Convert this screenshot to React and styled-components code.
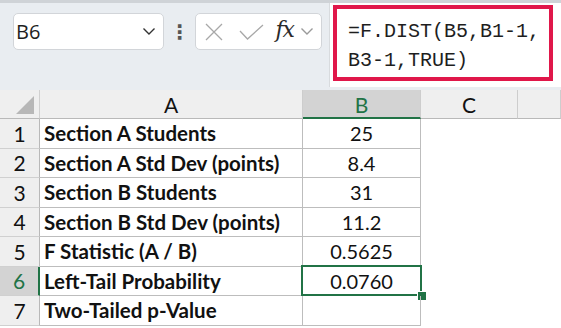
import React from 'react';
import styled, { createGlobalStyle } from 'styled-components';

const GlobalStyle = createGlobalStyle`
  html, body {
    margin: 0;
    padding: 0;
    background: #ffffff;
  }
  * { box-sizing: border-box; }
`;

const rows = [
  { label: 'Section A Students', value: '25' },
  { label: 'Section A Std Dev (points)', value: '8.4' },
  { label: 'Section B Students', value: '31' },
  { label: 'Section B Std Dev (points)', value: '11.2' },
  { label: 'F Statistic (A / B)', value: '0.5625' },
  { label: 'Left-Tail Probability', value: '0.0760', selected: true },
  { label: 'Two-Tailed p-Value', value: '' },
];

const Chevron = ({ color = '#333' }) => (
  <svg width="14" height="9" viewBox="0 0 14 9">
    <path d="M1.5 1.5 L7 7 L12.5 1.5" fill="none" stroke={color} strokeWidth="1.4" />
  </svg>
);

const CancelIcon = () => (
  <svg width="18" height="18" viewBox="0 0 18 18">
    <path d="M1 1 L17 17 M17 1 L1 17" stroke="#a8a8a8" strokeWidth="1.3" fill="none" />
  </svg>
);

const CheckIcon = () => (
  <svg width="25" height="16" viewBox="0 0 25 16">
    <path d="M1 7 L8.5 15 L24 1" stroke="#a8a8a8" strokeWidth="1.3" fill="none" />
  </svg>
);

export default function App() {
  return (
    <>
      <GlobalStyle />
      <Page>
        <Toolbar>
          <NameBox>
            <span>B6</span>
            <Chevron />
          </NameBox>
          <Dots>⋮</Dots>
          <FxBox>
            <CancelIcon />
            <CheckIcon />
            <Fx>fx</Fx>
            <Chevron color="#9a9a9a" />
          </FxBox>
          <FormulaBar>
            <Highlight>
              =F.DIST(B5,B1-1,<br />B3-1,TRUE)
            </Highlight>
          </FormulaBar>
        </Toolbar>
        <Sheet>
          <Corner />
          <ColHeader>A</ColHeader>
          <ColHeader active>B</ColHeader>
          <ColHeader>C</ColHeader>
          <ColHeader />
          {rows.map((r, i) => (
            <React.Fragment key={i}>
              <RowHeader active={r.selected}>{i + 1}</RowHeader>
              <LabelCell>{r.label}</LabelCell>
              <ValueCell>
                {r.value}
                {r.selected && (
                  <Selection>
                    <Handle />
                  </Selection>
                )}
              </ValueCell>
              <Blank />
              <Blank />
            </React.Fragment>
          ))}
        </Sheet>
      </Page>
    </>
  );
}

const Page = styled.div`
  width: 561px;
  height: 328px;
  overflow: hidden;
  background: #ffffff;
`;

const Toolbar = styled.div`
  height: 90px;
  background: #e9edf1;
  border-top: 3px solid #cfd3d7;
  display: flex;
  align-items: flex-start;
  padding: 10px 0 0 13px;
`;

const NameBox = styled.div`
  width: 151px;
  height: 37px;
  background: #ffffff;
  border: 1px solid #d2d5d9;
  border-radius: 5px;
  display: flex;
  align-items: center;
  justify-content: space-between;
  padding: 0 7px 0 2px;
  font-family: 'Open Sans', 'Liberation Sans', sans-serif;
  font-size: 20px;
  color: #1e1e1e;
`;

const Dots = styled.div`
  width: 32px;
  height: 37px;
  display: flex;
  align-items: center;
  justify-content: center;
  font-family: 'DejaVu Sans', sans-serif;
  font-size: 20px;
  font-weight: bold;
  color: #555;
`;

const FxBox = styled.div`
  width: 127px;
  height: 37px;
  background: #ffffff;
  border: 1px solid #d2d5d9;
  border-radius: 5px;
  display: flex;
  align-items: center;
  padding: 0 3px 0 9px;
  & > svg:nth-child(1) { margin-right: 16px; }
  & > svg:nth-child(2) { margin-right: 11px; }
`;

const Fx = styled.span`
  font-family: 'DejaVu Serif', 'Liberation Serif', serif;
  font-style: italic;
  font-size: 22px;
  letter-spacing: -1px;
  color: #2a2a2a;
  margin-right: 6px;
  line-height: 1;
  margin-top: -4px;
`;

const FormulaBar = styled.div`
  margin-left: 7px;
  margin-top: -10px;
  flex: 1;
  height: 84px;
  background: #ffffff;
  border-left: 1px solid #d8dbde;
  padding: 2px 8px 0 3px;
`;

const Highlight = styled.div`
  width: 220px;
  height: 76px;
  border: 4px solid #e0174a;
  padding: 8px 0 0 11px;
  font-family: 'Liberation Mono', 'DejaVu Sans Mono', monospace;
  font-size: 20px;
  line-height: 29px;
  color: #1e1e1e;
  white-space: nowrap;
`;

const Sheet = styled.div`
  display: grid;
  grid-template-columns: 40px 263px 118px 97px 1fr;
  grid-template-rows: 29px repeat(7, 29.5px);
  font-family: 'Lato', 'Open Sans', sans-serif;
  font-size: 20px;
  color: #111;
`;

const Corner = styled.div`
  background: #efefef;
  border-right: 1px solid #d0d0d0;
  border-bottom: 1px solid #b9b9b9;
  position: relative;
  &::after {
    content: '';
    position: absolute;
    right: 5px;
    bottom: 4px;
    width: 0;
    height: 0;
    border-left: 18px solid transparent;
    border-bottom: 18px solid #b7b7b7;
  }
`;

const ColHeader = styled.div`
  background: ${p => (p.active ? '#d3d3d3' : '#efefef')};
  color: ${p => (p.active ? '#217346' : '#111')};
  border-right: 1px solid #cdcdcd;
  border-bottom: ${p => (p.active ? '2px solid #217346' : '1px solid #b9b9b9')};
  display: flex;
  align-items: center;
  justify-content: center;
  font-size: 21px;
  padding-top: ${p => (p.active ? '1px' : '0')};
`;

const RowHeader = styled.div`
  background: ${p => (p.active ? '#d3d3d3' : '#efefef')};
  color: ${p => (p.active ? '#217346' : '#111')};
  border-right: ${p => (p.active ? '2px solid #217346' : '1px solid #b9b9b9')};
  border-bottom: 1px solid #d0d0d0;
  display: flex;
  align-items: center;
  justify-content: center;
  font-size: 21px;
`;

const LabelCell = styled.div`
  border-right: 1px solid #bdbdbd;
  border-bottom: 1px solid #bdbdbd;
  display: flex;
  align-items: center;
  padding-left: 4px;
  font-weight: bold;
  font-size: 20.5px;
  white-space: nowrap;
`;

const ValueCell = styled.div`
  border-right: 1px solid #bdbdbd;
  border-bottom: 1px solid #bdbdbd;
  display: flex;
  align-items: center;
  justify-content: center;
  position: relative;
`;

const Blank = styled.div`
  background: #ffffff;
`;

const Selection = styled.div`
  position: absolute;
  left: -2px;
  top: -2px;
  right: -2px;
  bottom: -1px;
  border: 2px solid #217346;
  pointer-events: none;
`;

const Handle = styled.div`
  position: absolute;
  right: -6px;
  bottom: -6px;
  width: 9px;
  height: 9px;
  background: #217346;
  border-left: 1px solid #ffffff;
  border-top: 1px solid #ffffff;
`;
